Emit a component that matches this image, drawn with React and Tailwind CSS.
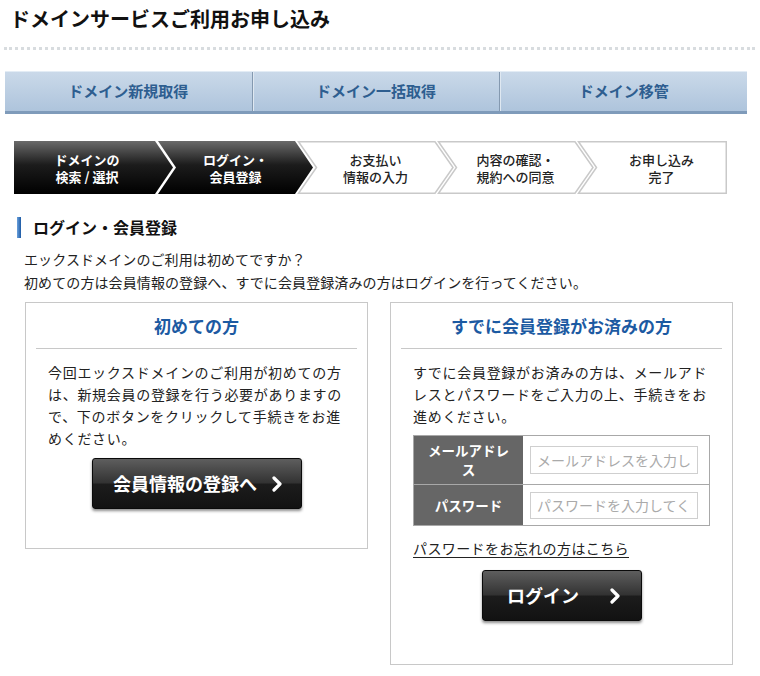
import React from "react";

const F = "font-['Noto_Sans_CJK_JP',sans-serif]";

function Chevron({ className = "" }) {
  return (
    <svg width="12" height="16" viewBox="0 0 12 16" className={className}>
      <polyline points="3,2 9,8 3,14" fill="none" stroke="#fff" strokeWidth="3.2" strokeLinecap="round" strokeLinejoin="round" />
    </svg>
  );
}

function DarkButton({ children, className = "" }) {
  return (
    <div
      className={`flex items-center justify-center rounded-[3px] border border-[#0a0a0a] bg-[linear-gradient(to_bottom,#5e5e5e_0%,#333_48%,#1c1c1c_52%,#121212_100%)] shadow-[0_2px_3px_rgba(0,0,0,0.45)] text-white font-bold ${className}`}
    >
      {children}
    </div>
  );
}

function Steps() {
  const whiteSteps = [284, 424];
  return (
    <div className="relative ml-[14px] mt-[27px] h-[53px] w-[713px]">
      <svg className="absolute left-0 top-0" width="713" height="53" viewBox="0 0 713 53">
        <defs>
          <linearGradient id="blk" x1="0" y1="0" x2="0" y2="1">
            <stop offset="0" stopColor="#6a6a6a" />
            <stop offset="0.45" stopColor="#1c1c1c" />
            <stop offset="1" stopColor="#000" />
          </linearGradient>
        </defs>
        <path d="M0,0 H141 L159,26.5 L141,53 H0 Z" fill="url(#blk)" />
        <path d="M144,0 H281 L299,26.5 L281,53 H144 L162,26.5 Z" fill="url(#blk)" />
        {whiteSteps.map((x) => (
          <path
            key={x}
            d={`M${x + 0.5},0.75 H${x + 137} L${x + 155},26.5 L${x + 137},52.25 H${x + 0.5} L${x + 18.5},26.5 Z`}
            fill="#fff"
            stroke="#c9c9c9"
            strokeWidth="1.5"
          />
        ))}
        <path d="M564.5,0.75 H712.25 V52.25 H564.5 L582.5,26.5 Z" fill="#fff" stroke="#c9c9c9" strokeWidth="1.5" />
      </svg>
      <div className="relative flex h-full items-center text-[13px] leading-[17px] font-bold text-center">
        <div className="w-[146px] text-white">ドメインの<br />検索 / 選択</div>
        <div className="ml-[16px] w-[119px] text-white">ログイン・<br />会員登録</div>
        <div className="ml-[21px] w-[119px] text-[#222] font-medium">お支払い<br />情報の入力</div>
        <div className="ml-[21px] w-[119px] text-[#222] font-medium">内容の確認・<br />規約への同意</div>
        <div className="ml-[21px] w-[131px] text-[#222] font-medium">お申し込み<br />完了</div>
      </div>
    </div>
  );
}

function Tabs() {
  const tabs = ["ドメイン新規取得", "ドメイン一括取得", "ドメイン移管"];
  return (
    <div className="ml-[5px] mt-[21px] flex h-[43px] w-[742px] border-t border-b-[3px] border-t-[#e3ecf5] border-b-[#7f9bba] bg-[linear-gradient(to_bottom,#cad9e9,#aec4dc)]">
      {tabs.map((t, i) => (
        <div
          key={t}
          className={`flex flex-1 items-center justify-center text-[15px] font-bold text-[#2e5e90] ${i < 2 ? "border-r border-r-[#8499b0] shadow-[1px_0_0_#dfe8f1]" : ""}`}
        >
          {t}
        </div>
      ))}
    </div>
  );
}

export default function App() {
  return (
    <div className={`${F} relative w-[760px] h-[676px] overflow-hidden bg-white text-[#222]`}>
      <h1 className="pl-[10px] pt-[6px] text-[20px] leading-[26px] font-bold text-[#111]">
        ドメインサービスご利用お申し込み
      </h1>
      <div className="ml-[4px] mt-[15px] h-[3px] w-[751px] border-t-[3px] border-dotted border-[#d8dcdf]" />
      <Tabs />
      <Steps />

      <div className="ml-[17px] mt-[23px] flex h-[21px] items-center">
        <div className="h-[21px] w-[4px] bg-[linear-gradient(to_right,#6aa0dc,#1d5aa4)]" />
        <div className="ml-[12px] text-[16px] leading-[21px] font-bold text-[#111]">ログイン・会員登録</div>
      </div>

      <div className="ml-[24px] mt-[10px] text-[14px] leading-[23px] text-[#222] tracking-[0.1px]">
        <div>エックスドメインのご利用は初めてですか？</div>
        <div>初めての方は会員情報の登録へ、すでに会員登録済みの方はログインを行ってください。</div>
      </div>

      <div className="ml-[25px] mt-[8px] flex items-start gap-[22px]">
        {/* Left box */}
        <div className="h-[247px] w-[343px] border border-[#c8c8c8]">
          <div className="mx-[10px] mt-[11px] border-b border-[#c8c8c8] pb-[10px] text-center text-[17px] leading-[24px] font-bold text-[#1c5aa2]">
            初めての方
          </div>
          <div className="mx-[22px] mt-[12px] text-[14px] leading-[22px] tracking-[0.7px] text-[#222] whitespace-nowrap">
            <div>今回エックスドメインのご利用が初めての方</div>
            <div>は、新規会員の登録を行う必要がありますの</div>
            <div>で、下のボタンをクリックして手続きをお進</div>
            <div>めください。</div>
          </div>
          <DarkButton className="ml-[66px] mt-[9px] h-[51px] w-[210px] text-[18px]">
            <span className="ml-[2px]">会員情報の登録へ</span>
            <Chevron className="ml-[14px]" />
          </DarkButton>
        </div>

        {/* Right box */}
        <div className="h-[363px] w-[343px] border border-[#c8c8c8]">
          <div className="mx-[10px] mt-[11px] border-b border-[#c8c8c8] pb-[10px] text-center text-[17px] leading-[24px] font-bold text-[#1c5aa2]">
            すでに会員登録がお済みの方
          </div>
          <div className="mx-[22px] mt-[12px] text-[14px] leading-[22px] tracking-[0.7px] text-[#222] whitespace-nowrap">
            <div>すでに会員登録がお済みの方は、メールアド</div>
            <div>レスとパスワードをご入力の上、手続きをお</div>
            <div>進めください。</div>
          </div>
          <div className="mx-[22px] mt-[8px] w-[297px] border border-[#a8a8a8]">
            <div className="flex h-[49px] border-b border-[#a8a8a8]">
              <div className="flex w-[109px] items-center justify-center bg-[#666] text-center text-[13.5px] leading-[19px] font-bold text-white">
                メールアドレ<br />ス
              </div>
              <div className="flex flex-1 items-center pl-[7px] pr-[11px]">
                <input
                  className="h-[28px] w-full border border-[#cfcfcf] px-[6px] text-[14px] text-[#222] placeholder:text-[#aaa] outline-none"
                  placeholder="メールアドレスを入力してください"
                />
              </div>
            </div>
            <div className="flex h-[40px]">
              <div className="flex w-[109px] items-center justify-center bg-[#666] text-[13.5px] font-bold text-white">
                パスワード
              </div>
              <div className="flex flex-1 items-center pl-[7px] pr-[11px]">
                <input
                  type="text"
                  className="h-[27px] w-full border border-[#cfcfcf] px-[6px] text-[14px] text-[#222] placeholder:text-[#aaa] outline-none"
                  placeholder="パスワードを入力してください"
                />
              </div>
            </div>
          </div>
          <div className="ml-[22px] mt-[11px] text-[14px] leading-[22px] tracking-[0.4px] text-[#222] underline underline-offset-[3px]">
            パスワードをお忘れの方はこちら
          </div>
          <DarkButton className="ml-[91px] mt-[11px] h-[51px] w-[160px] text-[18px]">
            <span className="ml-[4px]">ログイン</span>
            <Chevron className="ml-[30px]" />
          </DarkButton>
        </div>
      </div>
    </div>
  );
}
